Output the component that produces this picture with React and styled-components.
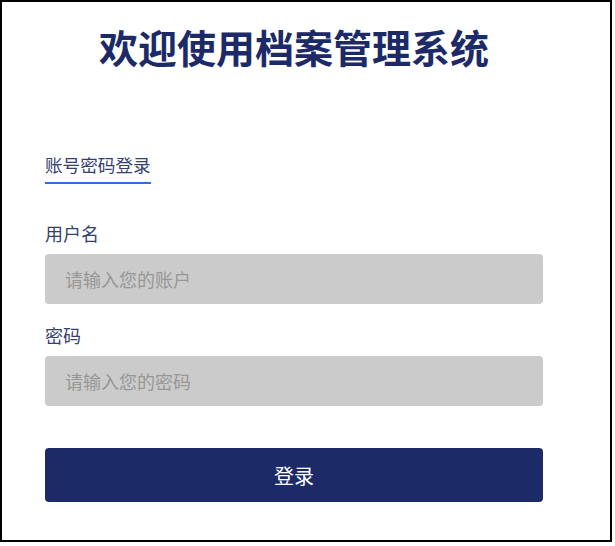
import React from 'react';
import styled, { createGlobalStyle } from 'styled-components';

const GlobalStyle = createGlobalStyle`
    body {
        margin: 0;
        background: #fff;
        font-family: "Noto Sans CJK SC", "Noto Sans", sans-serif;
    }
`;

const Frame = styled.div`
    width: 612px;
    height: 542px;
    box-sizing: border-box;
    border: 2px solid #000;
    background: #fff;
    padding: 24px 0 0 43px;
`;

const Panel = styled.div`
    width: 498px;
    display: flex;
    flex-direction: column;
`;

const Title = styled.h1`
    margin: 0;
    font-size: 39px;
    line-height: 40px;
    font-weight: 700;
    color: #1c2a68;
    text-align: center;
`;

const Tabs = styled.div`
    display: flex;
    margin-top: 90px;
`;

const Tab = styled.div`
    font-size: 17.6px;
    line-height: 18px;
    color: ${props => (props.active ? '#34416f' : '#666')};
    padding-bottom: 8px;
    border-bottom: 2px solid ${props => (props.active ? '#2f6fe4' : 'transparent')};
`;

const Form = styled.form`
    display: flex;
    flex-direction: column;
    margin-top: 40px;
`;

const Field = styled.div`
    display: flex;
    flex-direction: column;
    gap: 12px;
    margin-bottom: ${props => props.gap || '22px'};
`;

const Label = styled.label`
    font-size: 18px;
    line-height: 18px;
    color: #34416f;
`;

const Input = styled.input`
    height: 50px;
    box-sizing: border-box;
    border: none;
    border-radius: 4px;
    background: #cbcbcb;
    padding: 0 20px;
    font-family: inherit;
    font-size: 18px;
    color: #333;
    outline: none;
    &::placeholder {
        color: #979797;
    }
`;

const Submit = styled.button`
    height: 54px;
    border: none;
    border-radius: 4px;
    background: #1c2a68;
    color: #fff;
    font-family: inherit;
    font-size: 20px;
    cursor: pointer;
`;

function App() {
    return (
        <>
            <GlobalStyle />
            <Frame>
                <Panel>
                    <Title>欢迎使用档案管理系统</Title>
                    <Tabs>
                        <Tab active>账号密码登录</Tab>
                    </Tabs>
                    <Form onSubmit={e => e.preventDefault()}>
                        <Field>
                            <Label>用户名</Label>
                            <Input placeholder="请输入您的账户" />
                        </Field>
                        <Field gap="42px">
                            <Label>密码</Label>
                            <Input type="password" placeholder="请输入您的密码" />
                        </Field>
                        <Submit type="submit">登录</Submit>
                    </Form>
                </Panel>
            </Frame>
        </>
    );
}

export default App;
